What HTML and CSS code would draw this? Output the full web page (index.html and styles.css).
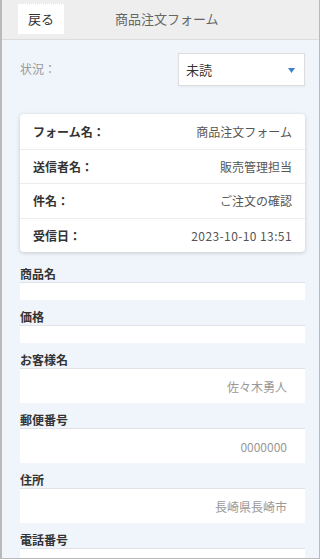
FILE: index.html
```html
<!DOCTYPE html>
<html lang="ja">
<head>
    <meta charset="UTF-8">
    <meta name="viewport" content="width=device-width, initial-scale=1.0">
    <title>商品注文フォーム</title>
    <link rel="stylesheet" href="styles.css">
</head>
<body>
    <div class="page">
        <div class="header">
            <button class="back-button" onclick="history.back()">戻る</button>
            <div class="header-title">商品注文フォーム</div>
        </div>
        <div class="content">
            <div class="status-row">
                <span class="status-label">状況：</span>
                <div class="status-select">
                    <span>未読</span>
                    <svg class="caret" width="7" height="5" viewBox="0 0 7 5"><path d="M0 0H7L3.5 5Z" fill="#3d82cf"/></svg>
                </div>
            </div>
            <div class="info-card">
                <div class="info-row"><span class="info-label">フォーム名：</span><span class="info-value">商品注文フォーム</span></div>
                <div class="info-row"><span class="info-label">送信者名：</span><span class="info-value">販売管理担当</span></div>
                <div class="info-row"><span class="info-label">件名：</span><span class="info-value">ご注文の確認</span></div>
                <div class="info-row"><span class="info-label">受信日：</span><span class="info-value date">2023-10-10 13:51</span></div>
            </div>
            <div class="fields">
                <div class="field-label">商品名</div>
                <div class="field-input"></div>
                <div class="field-label">価格</div>
                <div class="field-input"></div>
                <div class="field-label">お客様名</div>
                <div class="field-input filled">佐々木勇人</div>
                <div class="field-label">郵便番号</div>
                <div class="field-input filled">0000000</div>
                <div class="field-label">住所</div>
                <div class="field-input filled">長崎県長崎市</div>
                <div class="field-label">電話番号</div>
                <div class="field-input filled"></div>
            </div>
        </div>
    </div>
</body>
</html>
```

FILE: styles.css
```css
    html, body {
        margin: 0;
        padding: 0;
    }
    body {
        font-family: "Noto Sans CJK JP", "Noto Sans", sans-serif;
        background: #ffffff;
    }
    .page {
        width: 320px;
        height: 559px;
        box-sizing: border-box;
        border: 1px solid #b9b9b9;
        border-left-width: 2px;
        border-top: none;
        background-color: #eff5fa;
        overflow: hidden;
    }
    .header {
        height: 40px;
        box-sizing: border-box;
        background: #eeeeee;
        border-bottom: 1px solid #dcdcdc;
        display: flex;
        align-items: center;
        padding-left: 15px;
    }
    .back-button {
        width: 48px;
        height: 32px;
        margin-top: -2px;
        background: #ffffff;
        border: 1px dotted #e0e0e0;
        border-radius: 2px;
        font-family: inherit;
        font-size: 13px;
        color: #333;
        padding: 0;
        cursor: pointer;
    }
    .header-title {
        margin-left: 50px;
        margin-top: -2px;
        font-size: 13px;
        color: #666;
    }
    .content {
        padding: 13px 14px 0 18px;
    }
    .status-row {
        display: flex;
        align-items: center;
        justify-content: space-between;
    }
    .status-label {
        font-size: 12px;
        color: #999;
        margin-top: -2px;
    }
    .status-select {
        width: 127px;
        height: 33px;
        box-sizing: border-box;
        background: #ffffff;
        border: 1px solid #dddddd;
        box-shadow: 0 1px 2px rgba(0, 0, 0, 0.05);
        display: flex;
        align-items: center;
        justify-content: space-between;
        padding: 0 9px 0 7px;
        font-size: 13px;
        color: #333;
    }
    .caret {
        margin-top: 1px;
    }
    .info-card {
        margin-top: 28px;
        background: #ffffff;
        border-radius: 4px;
        box-shadow: 0 1px 4px rgba(0, 0, 0, 0.18);
    }
    .info-row {
        height: 34.5px;
        box-sizing: border-box;
        display: flex;
        align-items: center;
        justify-content: space-between;
        padding: 0 13px;
        border-top: 1px solid #ececec;
        font-size: 12px;
    }
    .info-row:first-child {
        border-top: none;
    }
    .info-label {
        font-weight: bold;
        color: #333;
    }
    .info-value {
        color: #555;
    }
    .info-value.date {
        letter-spacing: 0.4px;
    }
    .fields {
        padding-top: 5px;
    }
    .field-label {
        height: 25px;
        box-sizing: border-box;
        padding-top: 8px;
        line-height: 17px;
        font-size: 12px;
        font-weight: bold;
        color: #333;
    }
    .field-input {
        height: 18px;
        box-sizing: border-box;
        background: #ffffff;
        border-top: 1px solid #dfe3e8;
    }
    .field-input.filled {
        height: 35px;
        display: flex;
        align-items: center;
        justify-content: flex-end;
        padding-right: 18px;
        font-size: 12px;
        color: #999;
    }
```
